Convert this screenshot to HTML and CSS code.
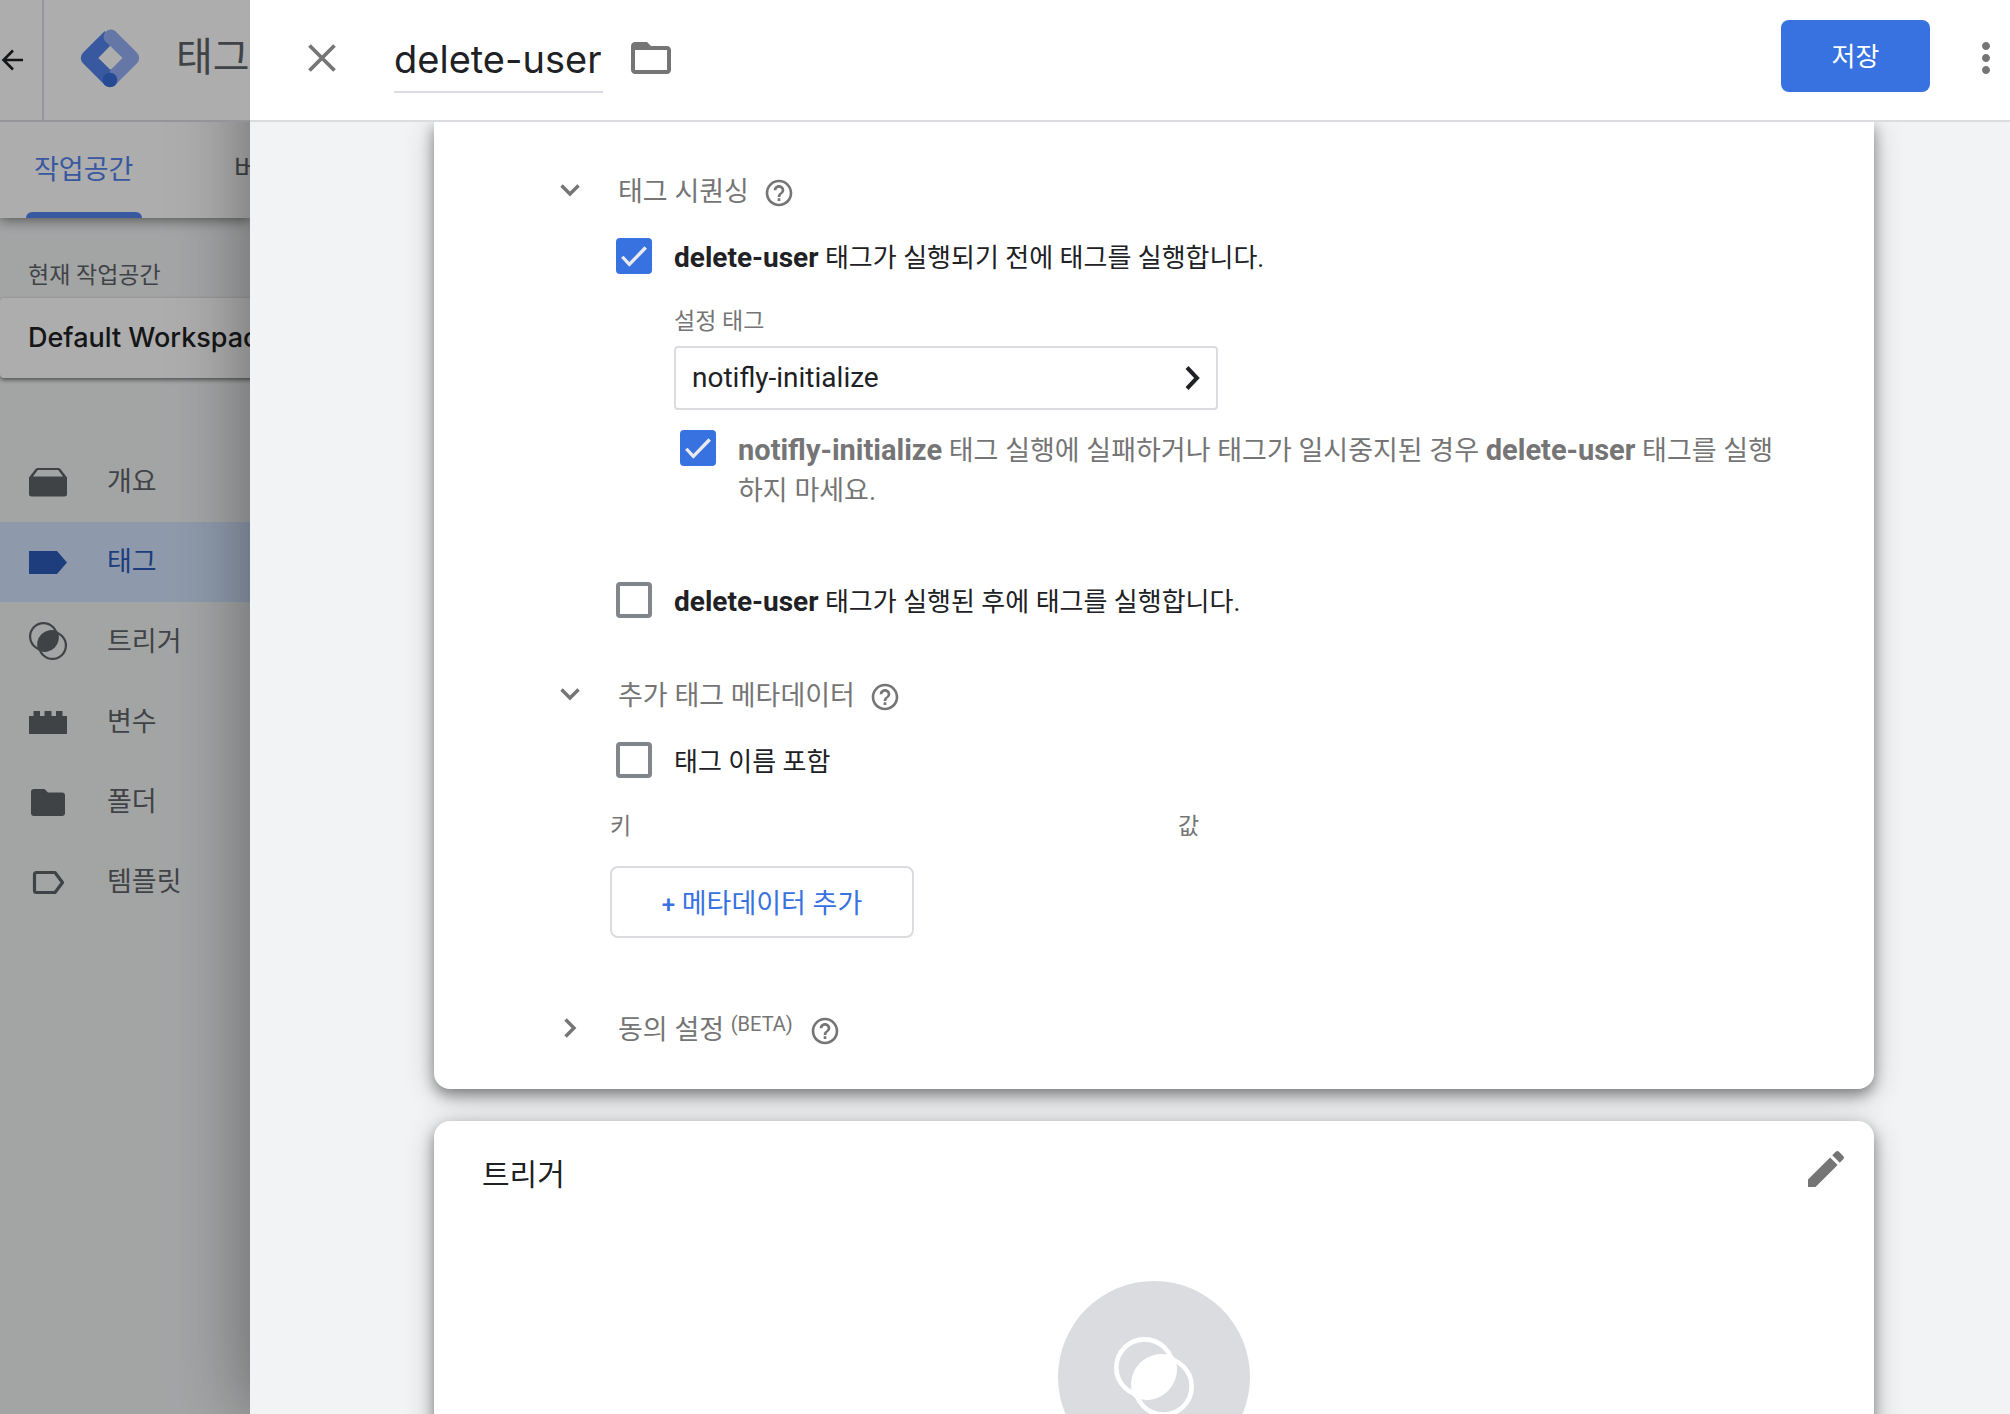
FILE: index.html
```html
<!DOCTYPE html>
<html lang="ko">
<head>
<meta charset="utf-8">
<title>delete-user</title>
<link rel="stylesheet" href="styles.css">
</head>
<body>
<svg class="sprite" aria-hidden="true">
  <symbol id="help" viewBox="0 0 24 24"><path d="M11 18h2v-2h-2v2zm1-16C6.48 2 2 6.48 2 12s4.48 10 10 10 10-4.48 10-10S17.520 2 12 2zm0 18c-4.410 0-8-3.590-8-8s3.590-8 8-8 8 3.590 8 8-3.590 8-8 8zm0-14c-2.210 0-4 1.790-4 4h2c0-1.100.9-2 2-2s2 .9 2 2c0 2-3 1.750-3 5h2c0-2.250 3-2.500 3-5 0-2.210-1.790-4-4-4z"/></symbol>
  <symbol id="chevron-down" viewBox="0 0 20 20"><path d="M1.500 5.500 10 14l8.500-8.500" fill="none" stroke="currentColor" stroke-width="3.400"/></symbol>
  <symbol id="chevron-right" viewBox="0 0 20 20"><path d="M5.500 1.500 14 10l-8.500 8.500" fill="none" stroke="currentColor" stroke-width="3.400"/></symbol>
  <symbol id="trigger" viewBox="0 0 38 38">
    <circle cx="14.500" cy="14.500" r="13.400" fill="none" stroke="currentColor" stroke-width="2.200"/>
    <circle cx="23.500" cy="23.500" r="13.400" fill="none" stroke="currentColor" stroke-width="2.200"/>
    <path d="M28.600 9.400A14.500 14.500 0 0 1 9.400 28.600 14.500 14.500 0 0 1 28.600 9.400z"/>
  </symbol>
</svg>
<div class="app">
  <aside class="workspace">
    <header class="brand">
      <a class="back" href="#" aria-label="뒤로">
        <svg width="24" height="24" viewBox="0 0 24 24"><path d="M23 12H3.500M13 2.500 3.500 12l9.500 9.500" fill="none" stroke="currentColor" stroke-width="2.600"/></svg>
      </a>
      <svg class="logo" width="60" height="60" viewBox="0 0 60 60">
        <path d="M24.800 2.900 3 24.800a7.300 7.300 0 0 0 0 10.400L24.800 57.100 36 46 18.500 30 30 18z" fill="#5383ec"/>
        <path d="M24.800 12.800 42.500 30 30 42.500v9l5.200 5.600L57 35.200a7.300 7.300 0 0 0 0-10.400L35.200 2.900a7.300 7.300 0 0 0-10.400 9.900z" fill="#96b0f6"/>
        <path d="M30 18.500 41.500 30 30 41.500 18.500 30z" fill="#fff"/>
        <circle cx="30" cy="52" r="7.300" fill="#386eda"/>
      </svg>
      <span class="product">태그 관리자</span>
    </header>
    <nav class="tabs">
      <a class="tab tab-active" href="#">작업공간</a>
      <a class="tab" href="#">버전</a>
    </nav>
    <div class="side">
      <p class="side-label">현재 작업공간</p>
      <button class="picker" type="button">Default Workspace</button>
      <nav class="menu">
        <a class="item" href="#"><svg width="38" height="38" viewBox="0 0 38 38"><path d="M8 6h22l1.500 1L38 15.500V32a2.500 2.500 0 0 1-2.500 2.500h-33A2.500 2.500 0 0 1 0 32V15.500L6.500 7zm.8 2L4 14.500h30L29.200 8z" fill-rule="evenodd"/></svg>개요</a>
        <a class="item item-active" href="#"><svg width="38" height="38" viewBox="0 0 38 38"><path d="M0 9h28l10 11.500L28 32H0z"/></svg>태그</a>
        <a class="item" href="#"><svg width="38" height="38"><use href="#trigger"/></svg>트리거</a>
        <a class="item" href="#"><svg width="38" height="38" viewBox="0 0 38 38"><path d="M0 32V14h4.500V9H11v5h4.500V9h7v5H27V9h6.500v5H38v18z"/></svg>변수</a>
        <a class="item" href="#"><svg width="38" height="38" viewBox="0 0 38 38"><path d="M5 7h10.500l3.500 3.500h14a3 3 0 0 1 3 3V31a3 3 0 0 1-3 3H5a3 3 0 0 1-3-3V10a3 3 0 0 1 3-3z"/></svg>폴더</a>
        <a class="item" href="#"><svg width="38" height="38" viewBox="0 0 38 38"><path d="M7.500 10.500H26L33.500 20.500 26 30.500H7.500a2 2 0 0 1-2-2v-16a2 2 0 0 1 2-2z" fill="none" stroke="currentColor" stroke-width="3.200" stroke-linejoin="round"/></svg>템플릿</a>
      </nav>
    </div>
  </aside>

  <main class="sheet">
    <header class="bar">
      <button class="icon-button close" type="button" aria-label="닫기">
        <svg width="30" height="30" viewBox="0 0 30 30"><path d="M2.500 2.500l25 25m0-25-25 25" fill="none" stroke="currentColor" stroke-width="3.800"/></svg>
      </button>
      <input class="name" type="text" value="delete-user" aria-label="태그 이름">
      <button class="icon-button" type="button" aria-label="폴더">
        <svg width="48" height="48" viewBox="0 0 24 24"><path d="M20 6h-8l-2-2H4c-1.100 0-1.990.9-1.990 2L2 18c0 1.100.9 2 2 2h16c1.100 0 2-.9 2-2V8c0-1.100-.9-2-2-2zm0 12H4V8h16v10z"/></svg>
      </button>
      <button class="save" type="button">저장</button>
      <button class="icon-button" type="button" aria-label="더보기">
        <svg width="48" height="48" viewBox="0 0 24 24"><path d="M12 8c1.100 0 2-.9 2-2s-.9-2-2-2-2 .9-2 2 .9 2 2 2zm0 2c-1.100 0-2 .9-2 2s.9 2 2 2 2-.9 2-2-.9-2-2-2zm0 6c-1.100 0-2 .9-2 2s.9 2 2 2 2-.9 2-2-.9-2-2-2z"/></svg>
      </button>
    </header>

    <div class="content">
      <section class="card settings">
        <section class="group">
          <h3 class="group-title">
            <button class="toggle" type="button" aria-expanded="true"><svg width="20" height="20"><use href="#chevron-down"/></svg><span>태그 시퀀싱</span></button>
            <button class="icon-button help" type="button" aria-label="도움말"><svg width="32" height="32"><use href="#help"/></svg></button>
          </h3>
          <div class="group-body">
            <label class="check"><input type="checkbox" checked><span><b>delete-user</b> 태그가 실행되기 전에 태그를 실행합니다.</span></label>
            <div class="nested">
              <p class="caption" id="setup-label">설정 태그</p>
              <button class="tag-select" type="button" aria-describedby="setup-label"><span>notifly-initialize</span><svg width="16" height="24" viewBox="0 0 16 24"><path d="M2 1.500 12 12 2 22.500" fill="none" stroke="currentColor" stroke-width="4"/></svg></button>
              <label class="check check-muted"><input type="checkbox" checked><span><b>notifly-initialize</b> 태그 실행에 실패하거나 태그가 일시중지된 경우 <b>delete-user</b> 태그를 실행하지 마세요.</span></label>
            </div>
            <label class="check check-after"><input type="checkbox"><span><b>delete-user</b> 태그가 실행된 후에 태그를 실행합니다.</span></label>
          </div>
        </section>

        <section class="group">
          <h3 class="group-title">
            <button class="toggle" type="button" aria-expanded="true"><svg width="20" height="20"><use href="#chevron-down"/></svg><span>추가 태그 메타데이터</span></button>
            <button class="icon-button help" type="button" aria-label="도움말"><svg width="32" height="32"><use href="#help"/></svg></button>
          </h3>
          <div class="group-body">
            <label class="check"><input type="checkbox"><span>태그 이름 포함</span></label>
            <table class="meta"><thead><tr><th>키</th><th>값</th></tr></thead></table>
            <button class="add" type="button"><span class="plus">+</span> 메타데이터 추가</button>
          </div>
        </section>

        <section class="group group-consent">
          <h3 class="group-title">
            <button class="toggle" type="button" aria-expanded="false"><svg width="20" height="20"><use href="#chevron-right"/></svg><span>동의 설정 <sup>(BETA)</sup></span></button>
            <button class="icon-button help" type="button" aria-label="도움말"><svg width="32" height="32"><use href="#help"/></svg></button>
          </h3>
        </section>
      </section>

      <section class="card triggers">
        <header class="card-head">
          <h2>트리거</h2>
          <button class="icon-button" type="button" aria-label="수정">
            <svg width="48" height="48" viewBox="0 0 24 24"><path d="M3 17.250V21h3.750L17.810 9.940l-3.750-3.750L3 17.250zM20.710 7.040c.39-.39.39-1.020 0-1.410l-2.340-2.340c-.39-.39-1.020-.39-1.410 0l-1.830 1.830 3.750 3.750 1.830-1.830z"/></svg>
          </button>
        </header>
        <div class="badge"><svg width="80" height="80"><use href="#trigger"/></svg></div>
      </section>
    </div>
  </main>
</div>
</body>
</html>
```
FILE: styles.css
```css
* {
  box-sizing: border-box;
}

body {
  margin: 0;
  font: 26px/40px Roboto, "Noto Sans CJK KR", sans-serif;
  color: #202124;
  background: #f1f3f4;
}

h2, h3, p {
  margin: 0;
  font-weight: 400;
}

button, input {
  font: inherit;
  color: inherit;
  margin: 0;
}

button {
  padding: 0;
  border: 0;
  background: none;
  cursor: pointer;
}

a {
  color: inherit;
  text-decoration: none;
}

svg {
  display: block;
  flex: none;
  fill: currentColor;
}

.sprite {
  position: absolute;
  width: 0;
  height: 0;
}

.app {
  display: flex;
  height: 100vh;
  overflow: hidden;
}

/* Dimmed workspace behind the sheet */
.workspace {
  position: relative;
  flex: none;
  width: 250px;
  overflow: hidden;
  white-space: nowrap;
  color: #5f6368;
}

.workspace::after {
  content: "";
  position: absolute;
  z-index: 2;
  inset: 0;
  background: rgba(0, 0, 0, .32);
}

.brand {
  position: relative;
  z-index: 1;
  display: flex;
  align-items: center;
  height: 122px;
  border-bottom: 2px solid #dadce0;
  background: #fff;
}

.back {
  display: flex;
  align-items: center;
  flex: none;
  width: 44px;
  height: 120px;
  border-right: 2px solid #dadce0;
  color: #202124;
}

.logo {
  margin: 0 36px 4px;
}

.product {
  margin-bottom: 4px;
  font-size: 40px;
}

.tabs {
  position: relative;
  display: flex;
  gap: 84px;
  height: 96px;
  padding-left: 26px;
  background: #fff;
  box-shadow: 0 2px 12px rgba(0, 0, 0, .5);
}

.tab {
  display: flex;
  flex: none;
  flex-direction: column;
  justify-content: space-between;
  padding-top: 28px;
  font-size: 27px;
  text-indent: 8px;
}

.tab-active {
  width: 116px;
  color: #5383ec;
}

.tab-active::after {
  content: "";
  height: 6px;
  border-radius: 6px 6px 0 0;
  background: #5383ec;
}

.side-label {
  padding: 41px 28px 5px;
  font-size: 23px;
  line-height: 34px;
}

.picker {
  width: 400px;
  height: 80px;
  padding-left: 28px;
  border-radius: 4px;
  background: #fff;
  box-shadow: 0 2px 4px rgba(0, 0, 0, .5);
  color: #202124;
  font: 500 27px/40px Inter, sans-serif;
  text-align: left;
}

.menu {
  margin-top: 64px;
}

.item {
  display: flex;
  align-items: center;
  gap: 40px;
  height: 80px;
  padding-left: 29px;
  font-size: 27px;
}

.item svg {
  margin-bottom: 2px;
}

.item-active {
  background: #d2e3fc;
  color: #2d5ab8;
}

/* Sheet */
.sheet {
  position: relative;
  display: flex;
  flex: 1;
  flex-direction: column;
  min-width: 0;
  background: #f1f3f4;
  box-shadow: 0 0 72px rgba(0, 0, 0, .4);
}

.bar {
  display: flex;
  align-items: center;
  flex: none;
  height: 122px;
  padding: 0 0 4px 57px;
  border-bottom: 2px solid #dadce0;
  background: #fff;
}

.icon-button {
  flex: none;
  color: #757575;
}

.close {
  margin-right: 57px;
}

.name {
  width: 209px;
  height: 70px;
  margin: 0 24px 0 0;
  padding: 4px 0 0;
  border: 0;
  border-bottom: 2px solid #dadce0;
  outline: 0;
  background: none;
  font: 38px/48px Inter, sans-serif;
}

.save {
  align-self: flex-start;
  width: 149px;
  height: 72px;
  margin: 20px 32px 0 auto;
  padding-top: 2px;
  border-radius: 8px;
  background: #3871e0;
  color: #fff;
}

.content {
  flex: 1;
  min-height: 0;
  overflow: hidden;
  padding: 0 136px 0 184px;
}

.card {
  border-radius: 16px;
  background: #fff;
  box-shadow: 0 6px 14px rgba(0, 0, 0, .4), 0 6px 32px rgba(0, 0, 0, .2);
}

.settings {
  padding: 48px 80px 41px 126px;
  border-radius: 0 0 16px 16px;
}

.group + .group {
  margin-top: 54px;
}

.group + .group-consent {
  margin-top: 70px;
}

.group-title {
  display: flex;
  gap: 14px;
  height: 40px;
  font-size: 27px;
  color: #757575;
}

.group-consent .group-title {
  gap: 16px;
}

.toggle {
  display: flex;
  align-items: center;
  gap: 38px;
  height: 40px;
}

.toggle span {
  padding-top: 4px;
}

.help {
  padding-top: 6px;
}

sup {
  font-size: 20px;
  line-height: 0;
  vertical-align: 8px;
}

.group-body {
  padding: 26px 0 0 50px;
}

.check {
  display: flex;
  gap: 22px;
  height: 40px;
  padding-left: 6px;
}

.check span {
  padding-top: 2px;
}

.check b {
  font-size: 28px;
}

.check input {
  appearance: none;
  flex: none;
  width: 36px;
  height: 36px;
  margin: 2px 0 0;
  border: 4px solid #80868b;
  border-radius: 4px;
}

.check input:checked {
  border: 0;
  background: #3871e0;
}

.check input:checked::before {
  content: "";
  display: block;
  height: 36px;
  background: #e8eaed;
  clip-path: polygon(37% 67%, 21% 49%, 14% 55%, 37% 80%, 86% 30%, 79% 23%);
}

.check-muted {
  height: 80px;
  font-size: 27px;
  color: #757575;
}

.check-muted b {
  font-size: 29px;
}

.check-after {
  margin-top: 72px;
}

.nested {
  padding: 30px 0 0 64px;
}

.caption {
  padding-top: 2px;
  font-size: 23px;
  line-height: 28px;
  color: #757575;
}

.tag-select {
  display: flex;
  align-items: center;
  justify-content: space-between;
  width: 544px;
  height: 64px;
  margin: 10px 0 18px;
  padding: 0 15px 0 16px;
  border: 2px solid #dadce0;
  border-radius: 4px;
  font-size: 28px;
}

.meta {
  width: 1136px;
  margin: 32px 0 24px;
  border-collapse: collapse;
  table-layout: fixed;
  font-size: 23px;
  line-height: 30px;
  color: #757575;
}

.meta th {
  padding: 0;
  font-weight: 400;
  text-align: left;
}

.add {
  width: 304px;
  height: 72px;
  padding-top: 4px;
  border: 2px solid #dadce0;
  border-radius: 8px;
  color: #3871e0;
  font-size: 27px;
}

.plus {
  font-size: 24px;
  font-weight: 500;
}

.triggers {
  height: 480px;
  margin-top: 32px;
  padding-top: 24px;
}

.card-head {
  display: flex;
  align-items: flex-start;
  justify-content: space-between;
  padding: 0 24px 0 48px;
}

.card-head h2 {
  font-size: 30px;
  line-height: 60px;
}

.badge {
  display: flex;
  align-items: center;
  justify-content: center;
  width: 192px;
  height: 192px;
  margin: 76px auto 0;
  border-radius: 50%;
  background: #dadce0;
  color: #fff;
}
```
